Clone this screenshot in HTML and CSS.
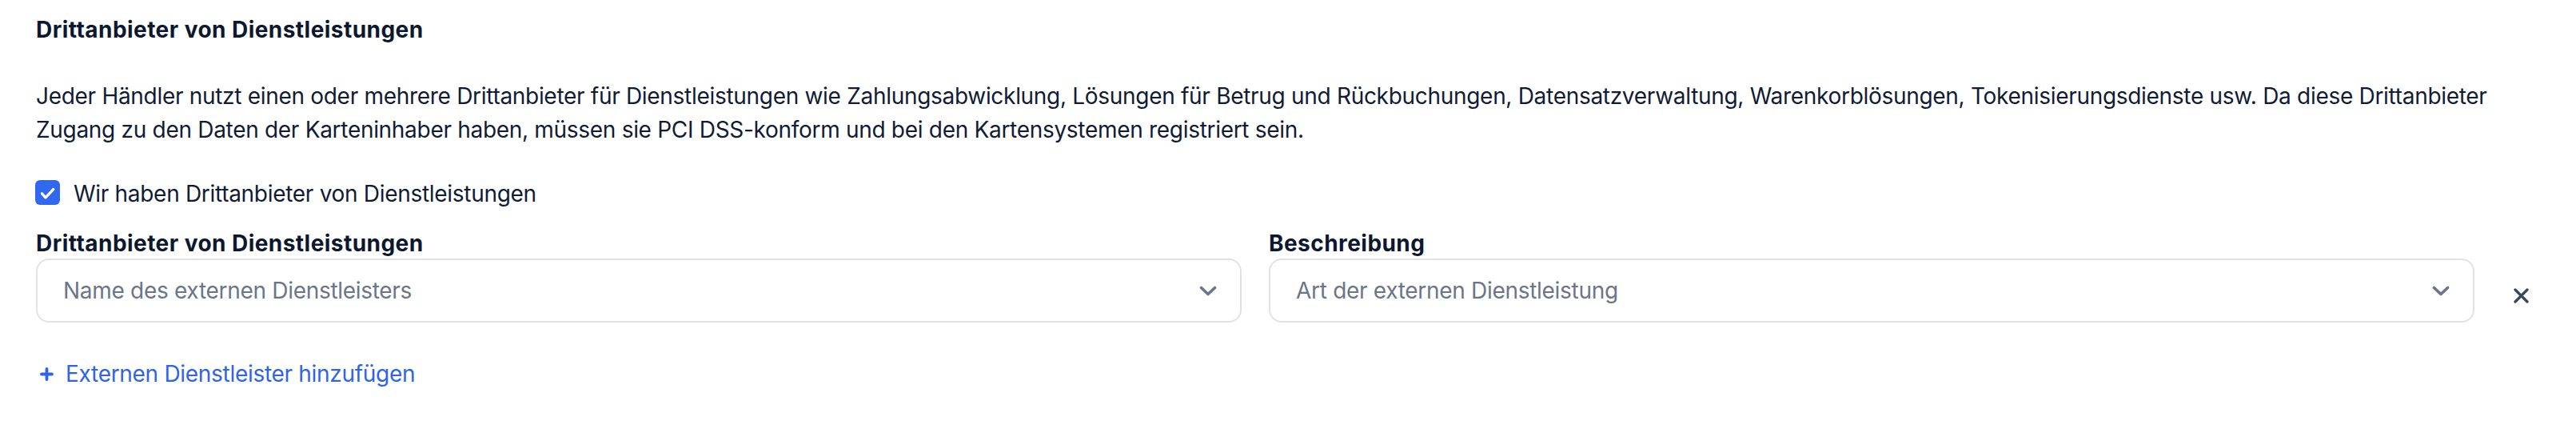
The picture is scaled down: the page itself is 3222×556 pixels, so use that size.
FILE: index.html
```html
<!DOCTYPE html>
<html lang="de">
<head>
<meta charset="utf-8">
<title>Drittanbieter von Dienstleistungen</title>
<link rel="stylesheet" href="styles.css">
</head>
<body>
<section class="section">
  <h2 class="title">Drittanbieter von Dienstleistungen</h2>
  <p class="desc">Jeder Händler nutzt einen oder mehrere Drittanbieter für Dienstleistungen wie Zahlungsabwicklung, Lösungen für Betrug und Rückbuchungen, Datensatzverwaltung, Warenkorblösungen, Tokenisierungsdienste usw. Da diese Drittanbieter Zugang zu den Daten der Karteninhaber haben, müssen sie PCI DSS-konform und bei den Kartensystemen registriert sein.</p>
  <label class="check">
    <span class="check-box">
      <svg viewBox="0 0 31 31" width="31" height="31"><path d="M8.5 16.8 L13 21.8 L22.8 11.5" fill="none" stroke="#fff" stroke-width="3.3" stroke-linecap="round" stroke-linejoin="round"/></svg>
    </span>
    <span class="check-label">Wir haben Drittanbieter von Dienstleistungen</span>
  </label>
  <div class="row">
    <div class="field">
      <div class="field-label">Drittanbieter von Dienstleistungen</div>
      <div class="select">
        <span class="placeholder">Name des externen Dienstleisters</span>
        <svg class="chev" viewBox="0 0 22 13" width="22" height="13"><path d="M2.5 2.5 L11 10.5 L19.5 2.5" fill="none" stroke="#6b7589" stroke-width="3.6" stroke-linecap="round" stroke-linejoin="round"/></svg>
      </div>
    </div>
    <div class="field">
      <div class="field-label">Beschreibung</div>
      <div class="select">
        <span class="placeholder">Art der externen Dienstleistung</span>
        <svg class="chev" viewBox="0 0 22 13" width="22" height="13"><path d="M2.5 2.5 L11 10.5 L19.5 2.5" fill="none" stroke="#6b7589" stroke-width="3.6" stroke-linecap="round" stroke-linejoin="round"/></svg>
      </div>
    </div>
    <button class="remove" type="button" aria-label="Entfernen">
      <svg viewBox="0 0 19 19" width="19" height="19"><path d="M2 2 L17 17 M17 2 L2 17" fill="none" stroke="#3a4660" stroke-width="3.3" stroke-linecap="round"/></svg>
    </button>
  </div>
  <a class="add" href="#">
    <svg viewBox="0 0 17 17" width="17" height="17"><path d="M8.5 2 V15 M2 8.5 H15" fill="none" stroke="#2f63ea" stroke-width="3.8" stroke-linecap="round"/></svg>
    <span>Externen Dienstleister hinzufügen</span>
  </a>
</section>
</body>
</html>
```
FILE: styles.css
```css
html, body {
  margin: 0;
  padding: 0;
  background: #ffffff;
}
body {
  font-family: "Inter", "Liberation Sans", sans-serif;
  font-size: 28px;
  line-height: 42px;
  color: #111b34;
  letter-spacing: -0.3px;
}
.section {
  padding: 16px 45px 0 45px;
}
.title {
  margin: 0;
  font-size: 28px;
  line-height: 42px;
  font-weight: 700;
  letter-spacing: 0.45px;
  color: #0c1830;
}
.desc {
  margin: 41px 0 0 0;
}
.check {
  display: flex;
  align-items: center;
  gap: 17px;
  margin-top: 38px;
  height: 42px;
  cursor: pointer;
}
.check-box {
  width: 31px;
  height: 31px;
  border-radius: 6px;
  background: #3168f0;
  display: flex;
  flex: none;
  margin-left: -1px;
  margin-top: -4px;
}
.row {
  display: flex;
  align-items: flex-end;
  gap: 34px;
  margin-top: 22px;
}
.field {
  flex: 1;
  display: flex;
  flex-direction: column;
  min-width: 0;
}
.field-label {
  font-weight: 700;
  letter-spacing: 0.45px;
  line-height: 38px;
  color: #0c1830;
}
.select {
  height: 80px;
  box-sizing: border-box;
  border: 2px solid #dfe2e8;
  border-radius: 16px;
  display: flex;
  align-items: center;
  justify-content: space-between;
  padding: 0 29px 0 32px;
  background: #fff;
}
.placeholder {
  color: #6b7589;
}
.chev {
  display: block;
}
.remove {
  width: 48px;
  height: 68px;
  flex: none;
  border: 0;
  background: transparent;
  padding: 0;
  display: flex;
  align-items: center;
  justify-content: center;
  cursor: pointer;
}
.add {
  display: inline-flex;
  align-items: center;
  gap: 15px;
  margin-top: 43px;
  margin-left: 5px;
  color: #2f63ea;
  text-decoration: none;
  line-height: 42px;
}
.add svg {
  display: block;
}
```
